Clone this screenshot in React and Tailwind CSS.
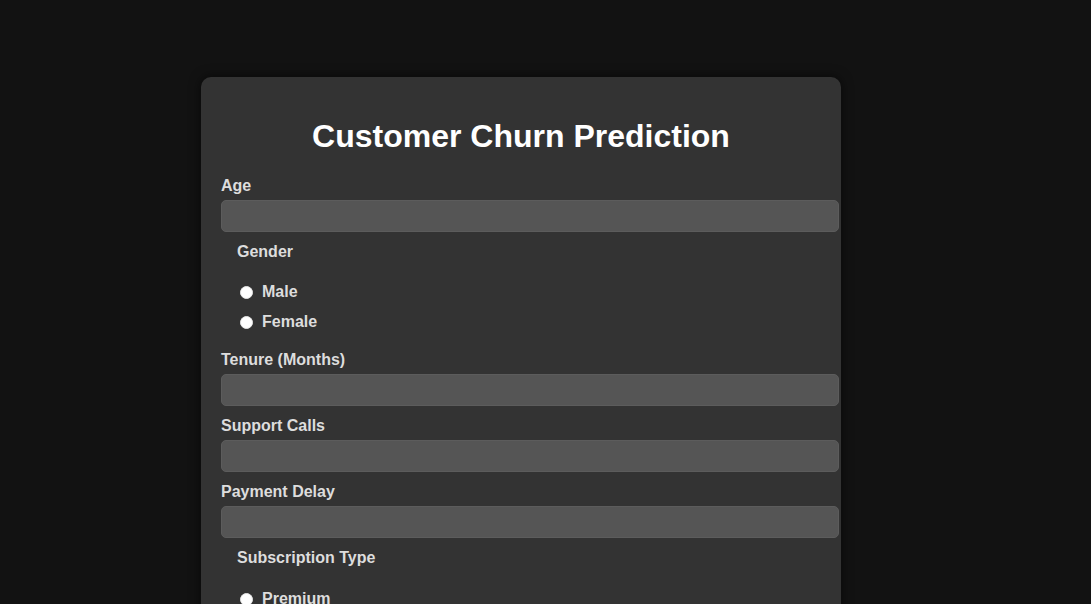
export default function App() {
  const Label = ({ children, className = "" }) => (
    <div className={"h-[18px] leading-[18px] text-[16px] font-bold text-[#dddddd] " + className}>{children}</div>
  );
  const Input = () => (
    <div className="w-[618px] h-[32px] rounded-[5px] bg-[#555555] border border-[#5c5c5c]" />
  );
  const Radio = ({ children }) => (
    <div className="flex items-center h-[18px]">
      <div className="ml-[3px] w-[13px] h-[13px] rounded-full bg-white border border-[#e8e8e8]" />
      <span className="ml-[9px] text-[16px] leading-[18px] font-bold text-[#dddddd]">{children}</span>
    </div>
  );
  return (
    <div className="min-h-[604px] h-[604px] overflow-hidden bg-[#121212] pl-[201px] pt-[77px]" style={{ fontFamily: '"Liberation Sans", Arial, sans-serif' }}>
      <div className="w-[640px] h-[600px] rounded-[10px] bg-[#333333] shadow-[0_0_12px_rgba(0,0,0,0.6)] px-[20px] pt-[41px]">
        <h1 className="text-center text-[32px] leading-[37px] font-bold text-white">Customer Churn Prediction</h1>
        <Label className="mt-[22px] mb-[5px]">Age</Label>
        <Input />
        <div className="pl-[16px] mt-[11px]">
          <Label>Gender</Label>
          <div className="mt-[22px] flex flex-col gap-[12px]">
            <Radio>Male</Radio>
            <Radio>Female</Radio>
          </div>
        </div>
        <Label className="mt-[20px] mb-[5px]">Tenure (Months)</Label>
        <Input />
        <Label className="mt-[11px] mb-[5px]">Support Calls</Label>
        <Input />
        <Label className="mt-[11px] mb-[5px]">Payment Delay</Label>
        <Input />
        <div className="pl-[16px] mt-[11px]">
          <Label>Subscription Type</Label>
          <div className="mt-[23px] flex flex-col gap-[12px]">
            <Radio>Premium</Radio>
          </div>
        </div>
      </div>
    </div>
  );
}
